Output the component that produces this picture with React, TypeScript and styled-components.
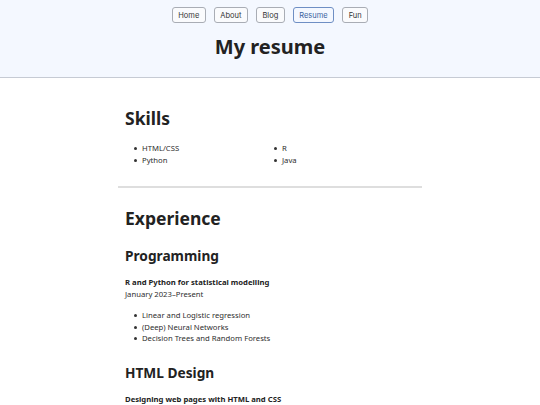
import React from "react";
import styled, { createGlobalStyle } from "styled-components";

const GlobalStyle = createGlobalStyle`
  body {
    margin: 0;
    background: #ffffff;
    color: #222222;
    font-family: "Noto Sans", "Open Sans", sans-serif;
  }
`;

const Header = styled.header`
  background-color: #f4f8ff;
  border-bottom: 1px solid #c6cbd4;
  height: 78px;
  padding-top: 7px;
  box-sizing: border-box;
  text-align: center;
`;

const Nav = styled.nav`
  display: flex;
  justify-content: center;
  gap: 8px;
`;

const NavButton = styled.a<{ $active?: boolean }>`
  display: inline-flex;
  align-items: center;
  height: 16px;
  padding: 0 5.5px;
  box-sizing: border-box;
  font-family: Inter, "Noto Sans", sans-serif;
  font-size: 7.5px;
  color: ${(p) => (p.$active ? "#3a5f9e" : "#333333")};
  background-color: ${(p) => (p.$active ? "#f4f8ff" : "#fafbfd")};
  border: 1px solid ${(p) => (p.$active ? "#6f8fc4" : "#a9adb5")};
  border-radius: 3px;
  text-decoration: none;
  cursor: pointer;
`;

const Title = styled.h1`
  margin: 11px 0 0;
  font-size: 20px;
  line-height: 26px;
  font-weight: 700;
  color: #222222;
`;

const Main = styled.main`
  width: 304px;
  margin: 0 auto;
`;

const Section = styled.section`
  padding: 0 7px;
`;

const SectionTitle = styled.h2<{ $top: number }>`
  margin: ${(p) => p.$top}px 0 0;
  font-size: 17.5px;
  line-height: 22px;
  font-weight: 700;
`;

const SubTitle = styled.h3<{ $top: number }>`
  margin: ${(p) => p.$top}px 0 0;
  font-size: 13.7px;
  line-height: 18px;
  font-weight: 700;
`;

const List = styled.ul<{ $columns?: number; $top: number }>`
  margin: ${(p) => p.$top}px 0 0;
  padding: 0 0 0 9px;
  list-style: none;
  display: grid;
  grid-template-columns: ${(p) => (p.$columns === 2 ? "140px 140px" : "1fr")};
  font-size: 7.7px;
  line-height: 11.5px;
  color: #2e2e2e;
`;

const Item = styled.li`
  display: flex;
  align-items: center;

  &::before {
    content: "";
    width: 3px;
    height: 3px;
    border-radius: 50%;
    background-color: #333333;
    margin-right: 5px;
    flex-shrink: 0;
  }
`;

const Divider = styled.hr`
  margin: 20px 0 0;
  border: none;
  border-top: 2px solid #dedede;
`;

const Role = styled.p`
  margin: 11px 0 0;
  font-size: 7.7px;
  line-height: 12px;
  font-weight: 700;
`;

const Period = styled.p`
  margin: 0;
  font-size: 7.7px;
  line-height: 12px;
  color: #2e2e2e;
`;

const navItems = ["Home", "About", "Blog", "Resume", "Fun"];
const skills = ["HTML/CSS", "R", "Python", "Java"];
const topics = [
  "Linear and Logistic regression",
  "(Deep) Neural Networks",
  "Decision Trees and Random Forests",
];

const App = () => {
  return (
    <>
      <GlobalStyle />
      <Header>
        <Nav>
          {navItems.map((item) => (
            <NavButton key={item} $active={item === "Resume"}>
              {item}
            </NavButton>
          ))}
        </Nav>
        <Title>My resume</Title>
      </Header>
      <Main>
        <Section>
          <SectionTitle $top={29}>Skills</SectionTitle>
          <List $columns={2} $top={14}>
            {skills.map((s) => (
              <Item key={s}>{s}</Item>
            ))}
          </List>
        </Section>
        <Divider />
        <Section>
          <SectionTitle $top={19}>Experience</SectionTitle>
          <SubTitle $top={18}>Programming</SubTitle>
          <Role>R and Python for statistical modelling</Role>
          <Period>January 2023–Present</Period>
          <List $top={10}>
            {topics.map((t) => (
              <Item key={t}>{t}</Item>
            ))}
          </List>
          <SubTitle $top={19}>HTML Design</SubTitle>
          <Role>Designing web pages with HTML and CSS</Role>
        </Section>
      </Main>
    </>
  );
};

export default App;
